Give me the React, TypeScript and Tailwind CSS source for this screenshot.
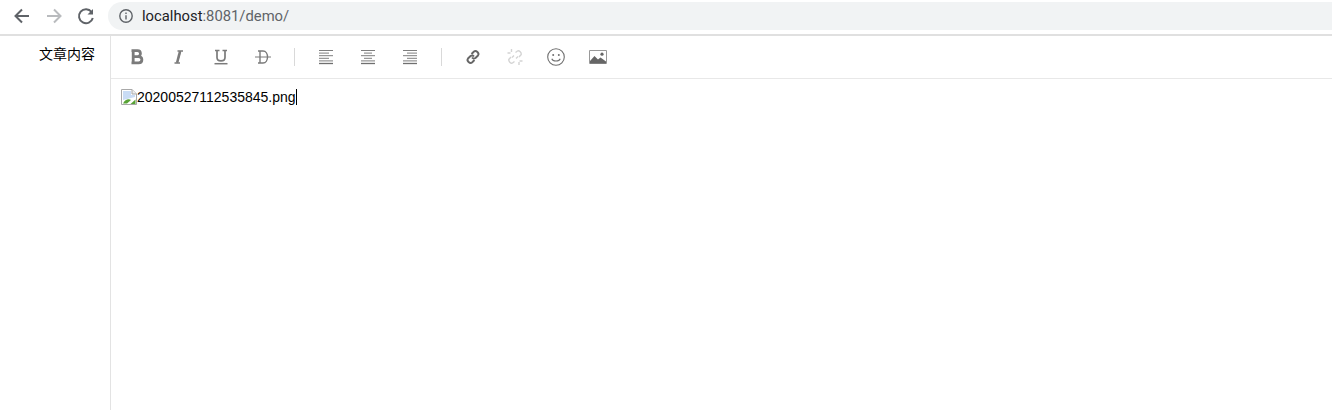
import type { ReactNode } from "react";

function Btn({ children }: { children: ReactNode }) {
  return <span className="flex h-[42px] w-[41.8px] items-center justify-center">{children}</span>;
}

function Sep() {
  return (
    <span className="flex h-[42px] w-[21.4px] items-center justify-center">
      <span className="h-[18px] w-px bg-[#d9d9d9]" />
    </span>
  );
}

function Icon({ children, color = "#7b7b7b" }: { children: ReactNode; color?: string }) {
  return (
    <svg width="18" height="18" viewBox="0 0 18 18" fill="none" stroke={color} strokeWidth="1">
      {children}
    </svg>
  );
}

function AlignIcon({ lines }: { lines: number[][] }) {
  return (
    <Icon color="#6f6f6f">
      {lines.map(([a, b], i) => (
        <path key={i} d={`M${a} ${2.5 + i * 2.6}H${b}`} strokeWidth={i === 5 ? 1.3 : 0.9} />
      ))}
    </Icon>
  );
}

function BrokenImage() {
  return (
    <svg width="16" height="16" viewBox="0 0 16 16" className="shrink-0">
      <path d="M.5.5H11L15.5 5V15.5H.5Z" fill="#fff" stroke="#a8a8a8" />
      <path d="M11 .5V5H15.5" fill="#eee" stroke="#a8a8a8" />
      <path d="M2 2H10V6H14V8L2 11Z" fill="#c9dcf5" />
      <path d="M2 14.5C4 10 8 9.5 10 11L6 14.5Z" fill="#58a336" />
      <path d="M9.5 15 14.5 10.5V15Z" fill="#58a336" />
    </svg>
  );
}

export default function App() {
  return (
    <div className="flex h-[410px] w-[1332px] flex-col overflow-hidden bg-white font-['Liberation_Sans',sans-serif] text-black">
      <div className="flex h-[34px] shrink-0 items-start bg-white">
        <div className="flex h-[32px] w-[108px] shrink-0 items-center pl-[12px]">
          <span className="flex w-[32px] items-center">
            <svg width="20" height="20" viewBox="0 0 20 20" fill="none" stroke="#5f6368" strokeWidth="2">
              <path d="M17 10H4M10 3.5 3.5 10l6.5 6.5" />
            </svg>
          </span>
          <span className="flex w-[32px] items-center">
            <svg width="20" height="20" viewBox="0 0 20 20" fill="none" stroke="#b9bbbe" strokeWidth="2">
              <path d="M3 10H16M10 3.5l6.5 6.5L10 16.5" />
            </svg>
          </span>
          <svg width="20" height="20" viewBox="0 0 20 20" fill="none">
            <path d="M15.6 6A7 7 0 1 0 16.8 12" stroke="#5f6368" strokeWidth="2" />
            <path d="M17 3V8.5H11.5Z" fill="#5f6368" />
          </svg>
        </div>
        <div className="mt-[2px] flex h-[28px] flex-1 items-center rounded-l-[14px] bg-[#f1f3f4] pl-[11px]">
          <svg width="14" height="14" viewBox="0 0 14 14" fill="none" stroke="#5f6368" strokeWidth="1.4">
            <circle cx="7" cy="7" r="6.2" />
            <path d="M7 6.2V10.4M7 3.5V5" />
          </svg>
          <span className="ml-[9px] font-['Roboto',sans-serif] text-[14.8px] leading-none text-[#202124]">
            localhost<span className="text-[#5f6368]">:8081/demo/</span>
          </span>
        </div>
      </div>
      <div className="h-[2px] shrink-0 bg-[#e0e0e0]" />
      <div className="flex min-h-0 flex-1">
        <div className="w-[110px] shrink-0 pr-[15px] pt-[7px] text-right font-['Noto_Sans_CJK_SC',sans-serif] text-[14px] leading-[20px]">
          文章内容
        </div>
        <div className="flex min-w-0 flex-1 flex-col border-l border-[#e3e3e3]">
          <div className="flex h-[43px] shrink-0 items-center border-b border-[#e8e8e8] pl-[5.5px]">
            <Btn>
              <Icon>
                <path d="M3.5 2.6H9.5C13.4 2.6 13.4 8.6 9.5 8.6H5.5M5.5 8.6H10.5C15 8.6 15 14.8 10.5 14.8H3.5M5.2 2.6V14.8" strokeWidth="2.8" />
              </Icon>
            </Btn>
            <Btn>
              <Icon>
                <path d="M7.5 3H13M4.5 15H10M10.5 3 7 15" strokeWidth="1.3" />
                <path d="M10 3.5 7.2 14.5" strokeWidth="2.6" />
              </Icon>
            </Btn>
            <Btn>
              <Icon>
                <path d="M3 2.5H7.5M10.5 2.5H15M5 2.5V9.5C5 14 13 14 13 9.5V2.5" strokeWidth="1.7" />
                <path d="M2.5 15.7H15.5" strokeWidth="1.5" />
              </Icon>
            </Btn>
            <Btn>
              <Icon>
                <path d="M4 3H9C15 3 15 15 9 15H4M6 3V15" strokeWidth="1.4" />
                <path d="M1 9H17" strokeWidth="1" />
              </Icon>
            </Btn>
            <Sep />
            <Btn>
              <AlignIcon lines={[[2, 16], [2, 12], [2, 16], [2, 12], [2, 16], [2, 16]]} />
            </Btn>
            <Btn>
              <AlignIcon lines={[[2, 16], [5, 13], [2, 16], [5, 13], [2, 16], [2, 16]]} />
            </Btn>
            <Btn>
              <AlignIcon lines={[[2, 16], [6, 16], [2, 16], [6, 16], [2, 16], [2, 16]]} />
            </Btn>
            <Sep />
            <Btn>
              <Icon>
                <g strokeWidth="1.9" stroke="#666">
                  <path d="M7.5 6 10 3.5C12 1.8 15.8 5.2 14 7.5L11.5 10C10 11 8.8 10.5 8 9.5" />
                  <path d="M10.5 12 8 14.5C6 16.2 2.2 12.8 4 10.5L6.5 8C8 7 9.2 7.5 10 8.5" />
                </g>
              </Icon>
            </Btn>
            <Btn>
              <Icon color="#d4d4d4">
                <g strokeWidth="1.4">
                  <path d="M9.5 4.5 11.5 3C13 2 16 5 15 6.8L13 9M8.5 13.5 6.5 15C5 16 2 13 3 11.2L5 9" />
                  <path d="M5.5 1V4M1.5 5H4.5M13 14V17M13.5 13H16.5M8 7.5 6 9.5M10 10.5 12 8.5" />
                </g>
              </Icon>
            </Btn>
            <Btn>
              <Icon color="#6f6f6f">
                <circle cx="9" cy="9" r="8.3" strokeWidth="1.1" />
                <circle cx="6.2" cy="7" r="1" fill="#6f6f6f" stroke="none" />
                <circle cx="11.8" cy="7" r="1" fill="#6f6f6f" stroke="none" />
                <path d="M4.8 10.8C6 13.8 12 13.8 13.2 10.8" strokeWidth="1.1" />
              </Icon>
            </Btn>
            <Btn>
              <Icon color="#999">
                <path d="M.5 2.5H17.5V15.5H.5Z" strokeWidth="1" />
                <path d="M1 15.5V13L5.5 8 9 11.5 11.5 9.5 17 13.5V15.5H1Z" fill="#666" stroke="none" />
                <circle cx="13" cy="6.2" r="1.6" fill="#666" stroke="none" />
              </Icon>
            </Btn>
          </div>
          <div className="flex items-center pl-[10px] pt-[10px] text-[14px] leading-[16px]">
            <BrokenImage />
            <span>20200527112535845.png</span>
            <span className="h-[16px] w-px bg-black" />
          </div>
        </div>
      </div>
    </div>
  );
}
